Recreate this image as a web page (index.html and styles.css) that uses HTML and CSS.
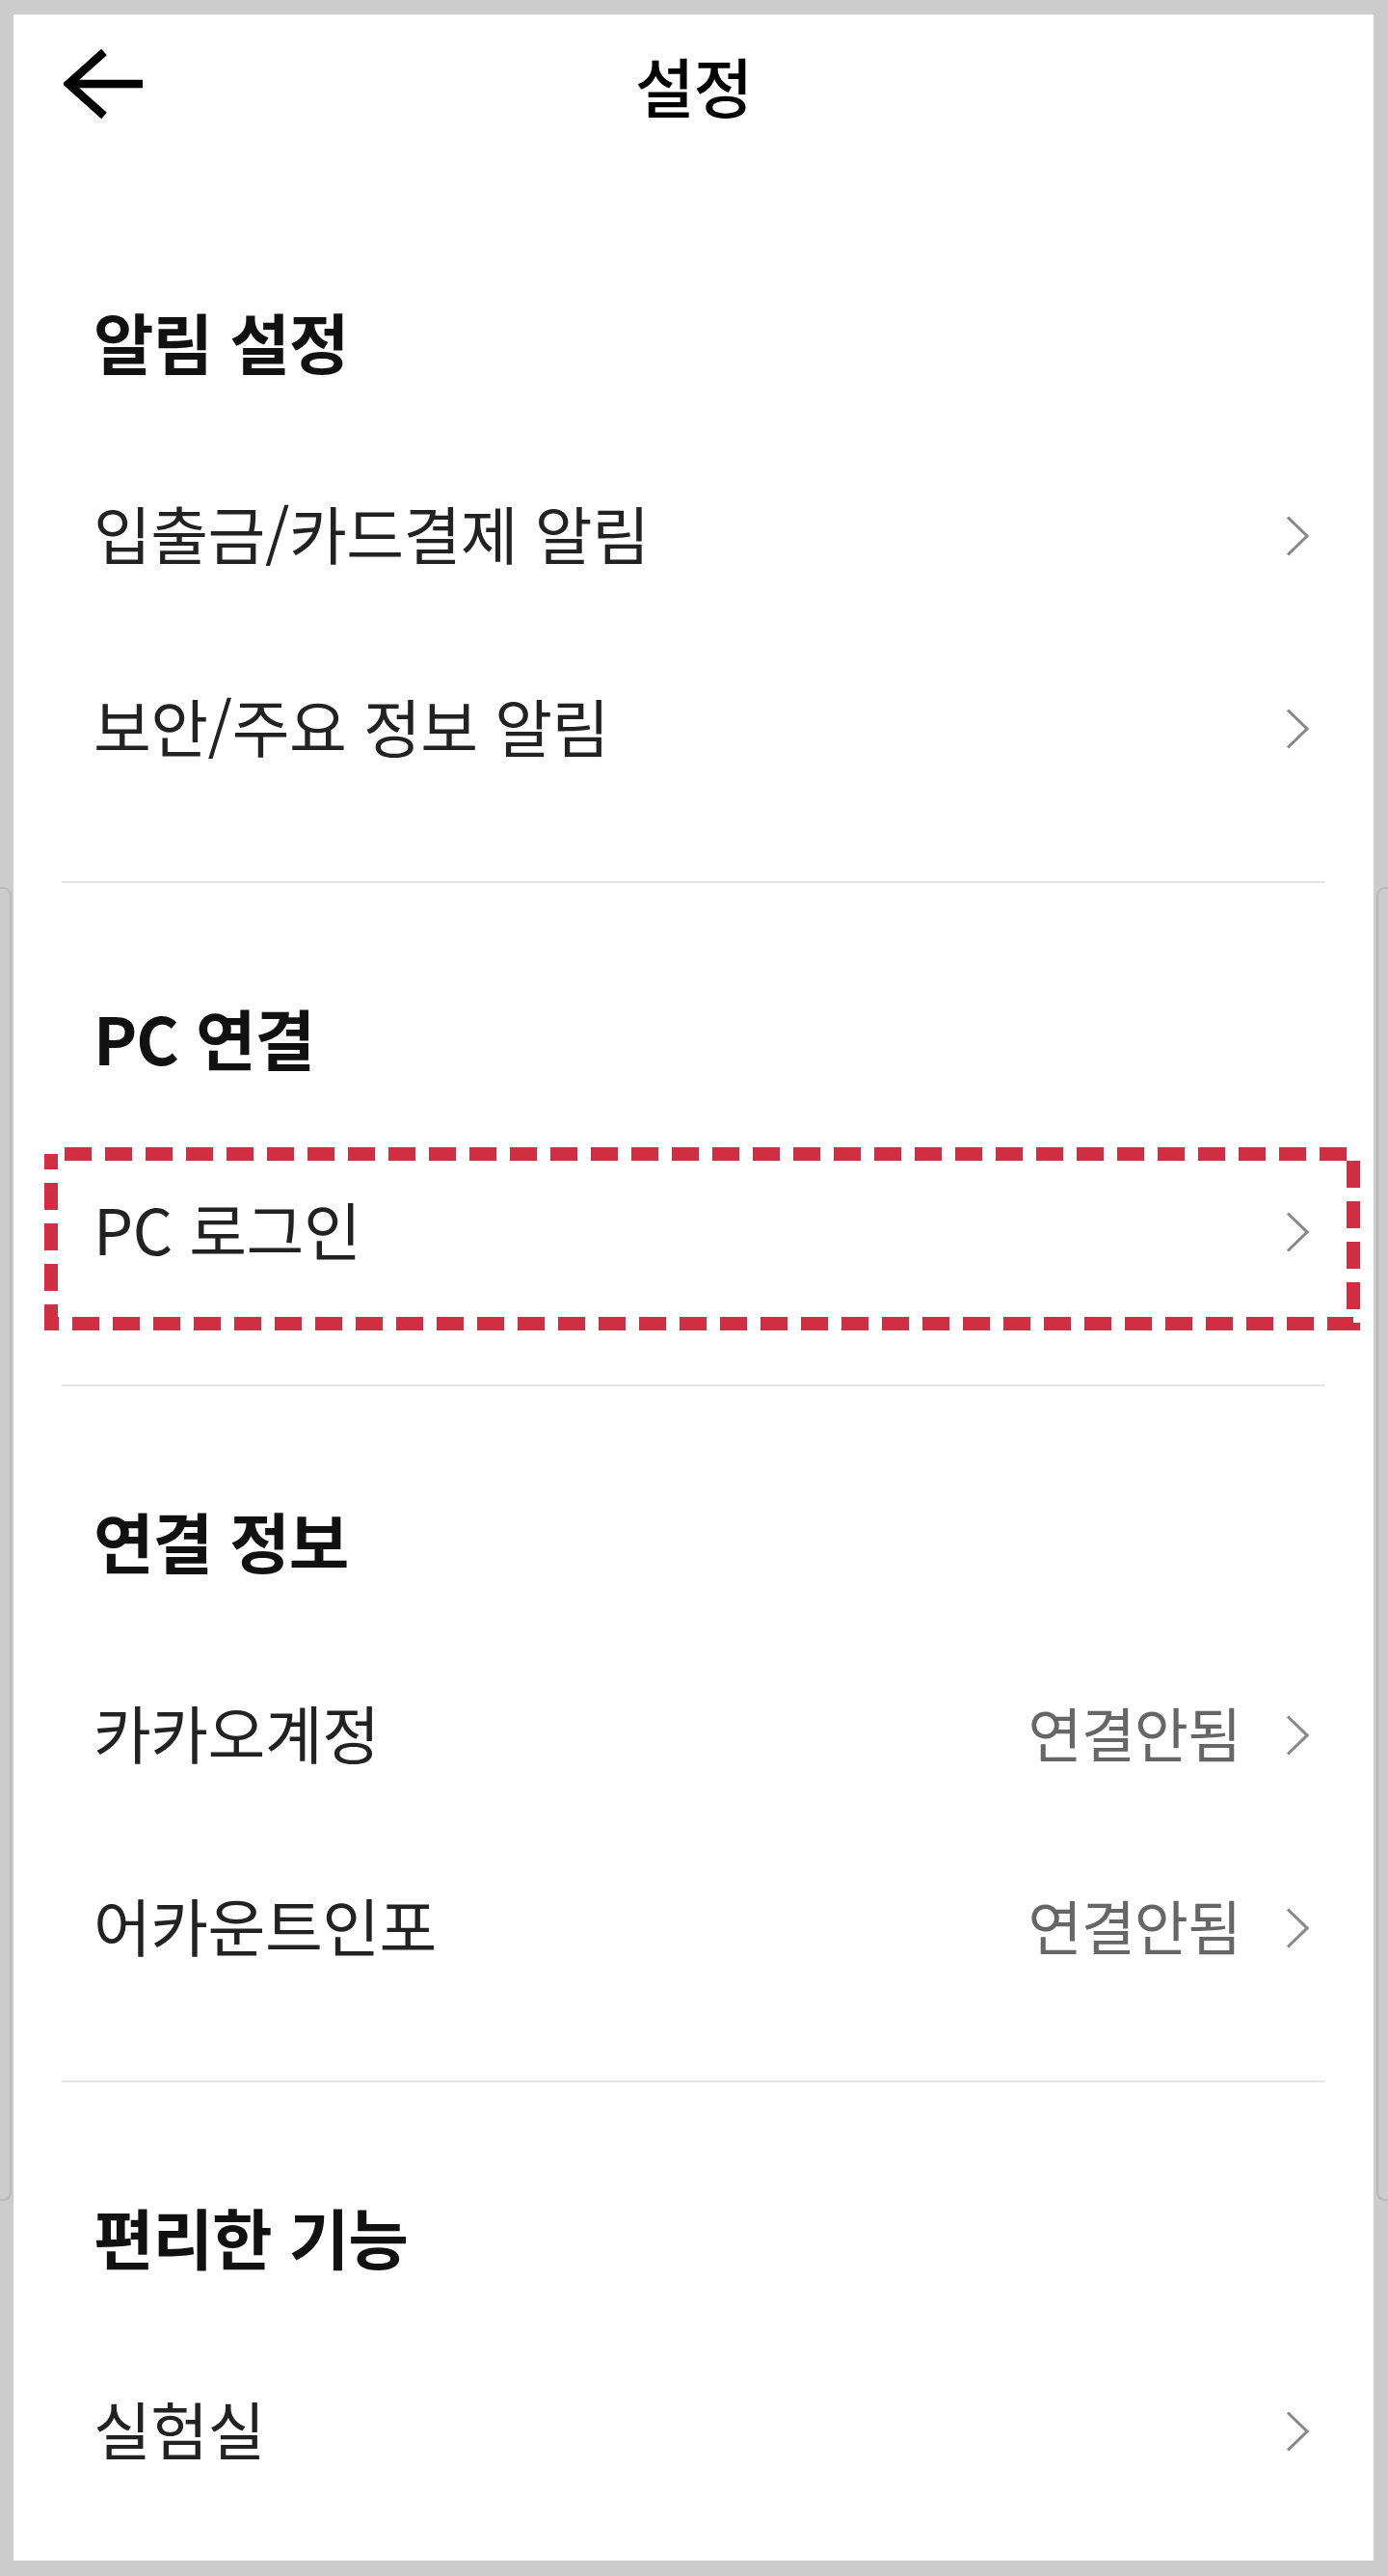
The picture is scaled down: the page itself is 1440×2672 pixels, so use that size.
FILE: index.html
```html
<!DOCTYPE html>
<html lang="ko">
<head>
<meta charset="utf-8">
<title>설정</title>
<link rel="stylesheet" href="styles.css">
</head>
<body>
<span class="frame-edge frame-edge--left"></span>
<span class="frame-edge frame-edge--right"></span>
<main class="panel">
  <header class="topbar">
    <button class="back" aria-label="뒤로">
      <svg width="84" height="74" viewBox="0 0 84 74">
        <path d="M42 4 L5 37 L42 70 M5 37 H82" fill="none" stroke="#000" stroke-width="8.5" stroke-linejoin="miter" stroke-linecap="butt"/>
      </svg>
    </button>
    <h1 class="title">설정</h1>
  </header>

  <section class="group group--first">
    <h2 class="group-title">알림 설정</h2>
    <div class="row"><span class="label">입출금/카드결제 알림</span><span class="chev"></span></div>
    <div class="row"><span class="label">보안/주요 정보 알림</span><span class="chev"></span></div>
  </section>
  <hr class="divider">

  <section class="group">
    <h2 class="group-title">PC 연결</h2>
    <div class="row row--marked">
      <span class="label">PC 로그인</span><span class="chev"></span>
      <svg class="mark" width="1365" height="190" viewBox="0 0 1365 190">
        <rect x="7" y="7" width="1351" height="176" fill="none" stroke="#cf2e43" stroke-width="14" stroke-dasharray="28 14" stroke-dashoffset="-14"/>
      </svg>
    </div>
  </section>
  <hr class="divider">

  <section class="group">
    <h2 class="group-title">연결 정보</h2>
    <div class="row"><span class="label">카카오계정</span><span class="value">연결안됨</span><span class="chev"></span></div>
    <div class="row"><span class="label">어카운트인포</span><span class="value">연결안됨</span><span class="chev"></span></div>
  </section>
  <hr class="divider">

  <section class="group group--last">
    <h2 class="group-title">편리한 기능</h2>
    <div class="row"><span class="label">실험실</span><span class="chev"></span></div>
  </section>
</main>
</body>
</html>
```

FILE: styles.css
```css
html, body {
  margin: 0;
  padding: 0;
}
body {
  background: #cccccc;
  padding: 15px 15px 16px 14px;
  font-family: "Noto Sans CJK KR", "Noto Sans", sans-serif;
  position: relative;
  min-height: 2672px;
  box-sizing: border-box;
}
.frame-edge {
  position: absolute;
  top: 920px;
  width: 13px;
  height: 1363px;
  border: 2px solid #b9b9b9;
  border-radius: 9px;
  box-sizing: border-box;
}
.frame-edge--left { left: -1px; border-left: none; border-radius: 0 9px 9px 0; }
.frame-edge--right { right: -1px; border-right: none; border-radius: 9px 0 0 9px; }

.panel {
  background: #ffffff;
  display: flex;
  flex-direction: column;
  position: relative;
}
.topbar {
  height: 148px;
  display: flex;
  align-items: center;
  justify-content: center;
  position: relative;
}
.back {
  position: absolute;
  left: 52px;
  top: 35px;
  border: 0;
  padding: 0;
  background: none;
  display: flex;
}
.title {
  margin: 0 0 4px;
  font-size: 67px;
  font-weight: 500;
  color: #000;
  line-height: 1;
  letter-spacing: -1px;
}
.group {
  display: flex;
  flex-direction: column;
  padding-top: 62px;
  padding-bottom: 58px;
}
.group--first { padding-top: 93px; }
.group--last { padding-bottom: 34px; }
.group-title {
  margin: 0;
  height: 200px;
  display: flex;
  align-items: center;
  padding-left: 83px;
  padding-bottom: 4px;
  box-sizing: border-box;
  font-size: 68px;
  font-weight: 700;
  color: #111;
  line-height: 1;
  letter-spacing: -1px;
}
.row {
  height: 200px;
  display: flex;
  align-items: center;
  padding-left: 83px;
  padding-right: 67px;
  position: relative;
}
.label {
  flex: 1;
  font-size: 65px;
  color: #222;
  line-height: 1;
  letter-spacing: -0.5px;
  padding-bottom: 7px;
}
.value {
  font-size: 61px;
  color: #666;
  line-height: 1;
  margin-right: 47px;
  letter-spacing: -1px;
  padding-bottom: 7px;
}
.chev {
  width: 24px;
  height: 42px;
  flex: none;
  background: url("data:image/svg+xml;utf8,<svg xmlns='http://www.w3.org/2000/svg' width='24' height='42' viewBox='0 0 24 42'><polyline points='2,1.5 22,21 2,40.5' fill='none' stroke='%23888888' stroke-width='3'/></svg>") no-repeat center;
}
.mark {
  position: absolute;
  left: 32px;
  top: 12px;
  pointer-events: none;
}
.divider {
  margin: 0 50px;
  border: 0;
  height: 2px;
  background: #e6e6e6;
}
```
